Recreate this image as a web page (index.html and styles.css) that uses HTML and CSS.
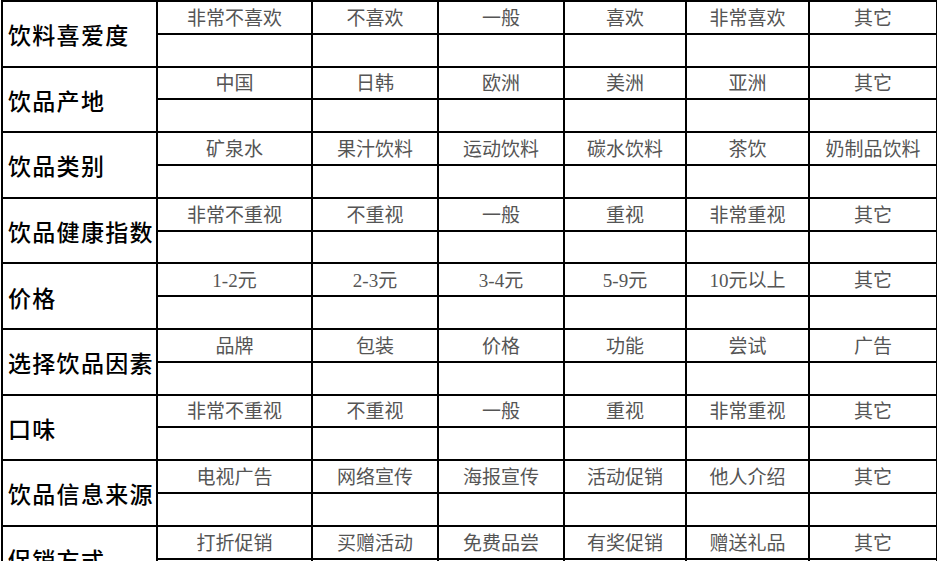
FILE: index.html
```html
<!DOCTYPE html>
<html lang="zh">
<head>
<meta charset="utf-8">
<link rel="stylesheet" href="styles.css">
</head>
<body>
<table class="survey">
  <colgroup>
    <col class="c-label"><col class="c-a"><col class="c-b"><col class="c-c"><col class="c-d"><col class="c-e"><col class="c-f">
  </colgroup>
  <tbody>
    <tr class="top"><th rowspan="2">饮料喜爱度</th><td>非常不喜欢</td><td>不喜欢</td><td>一般</td><td>喜欢</td><td>非常喜欢</td><td>其它</td></tr>
    <tr class="bot"><td></td><td></td><td></td><td></td><td></td><td></td></tr>
    <tr class="top"><th rowspan="2">饮品产地</th><td>中国</td><td>日韩</td><td>欧洲</td><td>美洲</td><td>亚洲</td><td>其它</td></tr>
    <tr class="bot"><td></td><td></td><td></td><td></td><td></td><td></td></tr>
    <tr class="top"><th rowspan="2">饮品类别</th><td>矿泉水</td><td>果汁饮料</td><td>运动饮料</td><td>碳水饮料</td><td>茶饮</td><td>奶制品饮料</td></tr>
    <tr class="bot"><td></td><td></td><td></td><td></td><td></td><td></td></tr>
    <tr class="top"><th rowspan="2">饮品健康指数</th><td>非常不重视</td><td>不重视</td><td>一般</td><td>重视</td><td>非常重视</td><td>其它</td></tr>
    <tr class="bot"><td></td><td></td><td></td><td></td><td></td><td></td></tr>
    <tr class="top"><th rowspan="2">价格</th><td>1-2元</td><td>2-3元</td><td>3-4元</td><td>5-9元</td><td>10元以上</td><td>其它</td></tr>
    <tr class="bot"><td></td><td></td><td></td><td></td><td></td><td></td></tr>
    <tr class="top"><th rowspan="2">选择饮品因素</th><td>品牌</td><td>包装</td><td>价格</td><td>功能</td><td>尝试</td><td>广告</td></tr>
    <tr class="bot"><td></td><td></td><td></td><td></td><td></td><td></td></tr>
    <tr class="top"><th rowspan="2">口味</th><td>非常不重视</td><td>不重视</td><td>一般</td><td>重视</td><td>非常重视</td><td>其它</td></tr>
    <tr class="bot"><td></td><td></td><td></td><td></td><td></td><td></td></tr>
    <tr class="top"><th rowspan="2">饮品信息来源</th><td>电视广告</td><td>网络宣传</td><td>海报宣传</td><td>活动促销</td><td>他人介绍</td><td>其它</td></tr>
    <tr class="bot"><td></td><td></td><td></td><td></td><td></td><td></td></tr>
    <tr class="top"><th rowspan="2">促销方式</th><td>打折促销</td><td>买赠活动</td><td>免费品尝</td><td>有奖促销</td><td>赠送礼品</td><td>其它</td></tr>
    <tr class="bot"><td></td><td></td><td></td><td></td><td></td><td></td></tr>
  </tbody>
</table>
</body>
</html>
```
FILE: styles.css
```css
html, body {
  margin: 0;
  padding: 0;
  background: #fff;
  overflow: hidden;
}
.survey {
  border-collapse: collapse;
  table-layout: fixed;
  width: 935px;
  margin: 0 0 0 1px;
}
.c-label { width: 155px; }
.c-a { width: 155px; }
.c-b { width: 126px; }
.c-c { width: 126px; }
.c-d { width: 122px; }
.c-e { width: 123px; }
.c-f { width: 128px; }
.survey th,
.survey td {
  border: 2px solid #000;
  padding: 0;
}
.survey tr { height: 32.8px; }
.survey th {
  text-align: left;
  vertical-align: middle;
  padding: 1px 0 0 5px;
  font-family: "Noto Sans CJK SC", sans-serif;
  font-weight: 500;
  font-size: 23px;
  letter-spacing: 1.3px;
  color: #000;
  white-space: nowrap;
  overflow: hidden;
}
.survey td {
  text-align: center;
  vertical-align: middle;
  font-family: "Liberation Serif", "Noto Sans CJK SC", serif;
  font-weight: 400;
  font-size: 19px;
  color: #555;
  white-space: nowrap;
  line-height: 1;
}
.survey tr.top td {
  border-bottom-width: 1.5px;
  padding-top: 2px;
}
```
